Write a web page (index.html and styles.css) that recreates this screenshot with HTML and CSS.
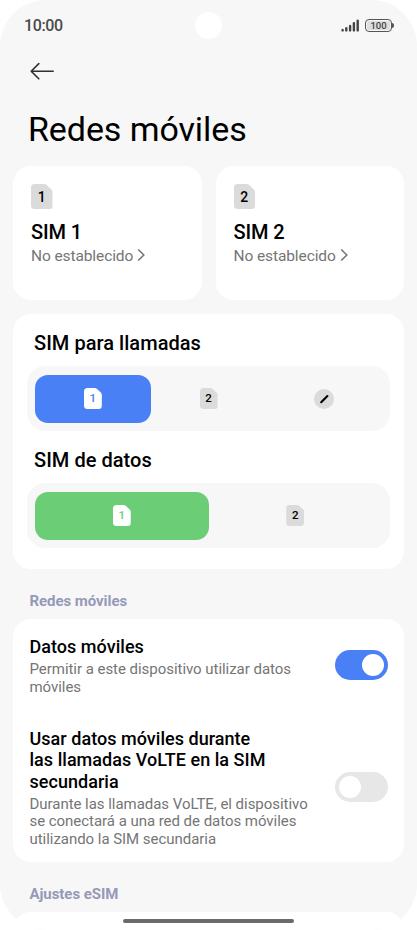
FILE: index.html
```html
<!DOCTYPE html>
<html lang="es">
<head>
    <meta charset="UTF-8">
    <meta name="viewport" content="width=device-width, initial-scale=1.0">
    <title>Redes móviles</title>
    <link rel="stylesheet" href="styles.css">
</head>
<body>

    <div class="phone">
        <header class="status-bar">
            <span class="time">10:00</span>
            <span class="camera"></span>
            <div class="status-icons">
                <svg class="signal" width="19" height="13" viewBox="0 0 19 13">
                    <path d="M1.6 11.4V11M5.3 11.4V9.2M9.1 11.4V6.9M12.9 11.4V4.3M16.7 11.4V1.8" fill="none" stroke="#444" stroke-width="2.4" stroke-linecap="round"/>
                </svg>
                <span class="battery"><span class="battery-level">100</span></span>
            </div>
        </header>

        <nav>
            <svg class="back" width="24" height="18" viewBox="0 0 24 18" aria-label="Atrás">
                <path d="M23.2 9.2H1.2M8.8 1.6L1.2 9.2L8.8 16.8" fill="none" stroke="#303030" stroke-width="1.6" stroke-linecap="round" stroke-linejoin="round"/>
            </svg>
        </nav>

        <h1>Redes móviles</h1>

        <main>
            <section class="sim-cards">
                <article class="card sim-card">
                    <span class="chip chip-large">1</span>
                    <h2>SIM 1</h2>
                    <p>No establecido <svg width="8" height="14" viewBox="0 0 8 14"><path d="M1.2 1.5L6.8 7L1.2 12.5" fill="none" stroke="#777" stroke-width="1.6"/></svg></p>
                </article>
                <article class="card sim-card">
                    <span class="chip chip-large">2</span>
                    <h2>SIM 2</h2>
                    <p>No establecido <svg width="8" height="14" viewBox="0 0 8 14"><path d="M1.2 1.5L6.8 7L1.2 12.5" fill="none" stroke="#777" stroke-width="1.6"/></svg></p>
                </article>
            </section>

            <section class="card sim-select">
                <h2>SIM para llamadas</h2>
                <div class="segmented">
                    <div class="segment active-calls"><span class="chip">1</span></div>
                    <div class="segment"><span class="chip">2</span></div>
                    <div class="segment">
                        <svg width="20" height="20" viewBox="0 0 20 20">
                            <circle cx="10" cy="10" r="10" fill="#dbdbdb"/>
                            <path d="M7.2 13.2L13.4 7" stroke="#000" stroke-width="2.1" stroke-linecap="round"/>
                        </svg>
                    </div>
                </div>
                <h2>SIM de datos</h2>
                <div class="segmented">
                    <div class="segment active-data"><span class="chip">1</span></div>
                    <div class="segment"><span class="chip">2</span></div>
                </div>
            </section>

            <h3 class="section-title">Redes móviles</h3>

            <section class="card settings">
                <div class="setting">
                    <div class="setting-text">
                        <h4>Datos móviles</h4>
                        <p>Permitir a este dispositivo utilizar datos<br>móviles</p>
                    </div>
                    <span class="toggle on"></span>
                </div>
                <div class="setting">
                    <div class="setting-text">
                        <h4>Usar datos móviles durante<br>las llamadas VoLTE en la SIM<br>secundaria</h4>
                        <p>Durante las llamadas VoLTE, el dispositivo<br>se conectará a una red de datos móviles<br>utilizando la SIM secundaria</p>
                    </div>
                    <span class="toggle"></span>
                </div>
            </section>

            <h3 class="section-title">Ajustes eSIM</h3>

            <section class="card next-card"></section>
        </main>

        <div class="home-bar"></div>
    </div>

</body>
</html>
```
FILE: styles.css
```css
:root {
    --background: #f7f7f7;
    --surface: #fff;
    --blue: #4a80f5;
    --green: #6bcd76;
    --chip: #dbdbdb;
    --text-secondary: #757575;
    --section: #9699b8;
}

* {
    box-sizing: border-box;
    margin: 0;
    padding: 0;
}

body {
    font-family: Roboto, sans-serif;
    color: #000;
    background: #fff;
}

.phone {
    position: relative;
    height: 930px;
    overflow: hidden;
    background: var(--background);
    border-radius: 46px;
}

h2, h4 {
    font-weight: 500;
}

svg {
    display: block;
}

/* status bar */
.status-bar {
    display: grid;
    grid-template-columns: 1fr 27px 1fr;
    align-items: center;
    height: 51px;
    padding: 0 24px 0 24px;
}

.time {
    font-size: 16px;
    font-weight: 500;
    letter-spacing: -0.35px;
    color: #4a4a4a;
}

.camera {
    width: 27px;
    height: 27px;
    border-radius: 50%;
    background: #fff;
}

.status-icons {
    display: flex;
    justify-content: flex-end;
    align-items: center;
    gap: 5px;
}

.battery {
    position: relative;
    width: 27px;
    height: 13px;
    margin-right: 1px;
    padding: 1px;
    border: 1.3px solid #555;
    border-radius: 4px;
}

.battery::after {
    content: '';
    position: absolute;
    top: 3px;
    right: -3px;
    width: 2px;
    height: 5px;
    border-radius: 0 2px 2px 0;
    background: #555;
}

.battery-level {
    display: block;
    height: 9px;
    border-radius: 2px;
    background: #dedede;
    font-size: 9.5px;
    font-weight: 500;
    line-height: 10px;
    text-align: center;
    color: #444;
}

nav {
    height: 58px;
    padding: 11px 0 0 30px;
}

h1 {
    padding-left: 28px;
    font-size: 34px;
    font-weight: 400;
    line-height: 40px;
    letter-spacing: -0.08px;
}

main {
    padding: 17px 13px 0;
}

.card {
    background: var(--surface);
    border-radius: 18px;
}

/* small SIM icon with a cut corner */
.chip {
    display: block;
    width: 18px;
    height: 21px;
    background: var(--chip);
    border-radius: 3.5px;
    clip-path: polygon(0 0, 62% 0, 72% 3%, 97% 24%, 100% 32%, 100% 100%, 0 100%);
    font-size: 11.5px;
    font-weight: 500;
    line-height: 21px;
    text-align: center;
}

.chip-large {
    width: 21.5px;
    height: 25px;
    font-size: 14px;
    line-height: 26px;
}

.sim-cards {
    display: grid;
    grid-template-columns: 1fr 1fr;
    gap: 14px;
}

.sim-card {
    height: 134px;
    padding: 18px;
}

.sim-card h2 {
    margin-top: 11px;
    font-size: 20px;
    line-height: 25px;
    letter-spacing: -0.1px;
}

.sim-card p {
    display: flex;
    align-items: center;
    gap: 4px;
    margin-top: 1px;
    font-size: 15.5px;
    line-height: 20px;
    letter-spacing: -0.1px;
    color: var(--text-secondary);
}

.sim-card p svg {
    margin-top: -2px;
}

.sim-select {
    height: 255px;
    margin-top: 14px;
    padding: 17px 14px 0;
}

.sim-select h2 {
    padding-left: 7px;
    font-size: 20px;
    line-height: 24px;
    letter-spacing: 0.04px;
}

.segmented {
    display: flex;
    height: 65px;
    margin: 11px 0 17px;
    padding: 8.5px 8px;
    border-radius: 18px;
    background: var(--background);
}

.segment {
    flex: 1;
    display: flex;
    align-items: center;
    justify-content: center;
    border-radius: 13px;
}

.active-calls {
    background: var(--blue);
    color: var(--blue);
}

.active-data {
    background: var(--green);
    color: var(--green);
}

.active-calls .chip,
.active-data .chip {
    background: #fff;
}

.section-title {
    height: 50px;
    padding: 22px 0 0 16.5px;
    font-size: 15px;
    font-weight: 700;
    line-height: 20px;
    letter-spacing: -0.06px;
    color: var(--section);
}

/* settings list */
.settings {
    height: 243px;
    padding: 17px 16px 0 16.5px;
}

.setting {
    display: flex;
    align-items: center;
    justify-content: space-between;
    margin-bottom: 32px;
}

.setting h4 {
    font-size: 18px;
    line-height: 21.3px;
    letter-spacing: 0.03px;
}

.setting p {
    margin-top: 4px;
    font-size: 15px;
    line-height: 17.4px;
    letter-spacing: -0.04px;
    color: var(--text-secondary);
}

.toggle {
    flex: none;
    width: 53px;
    height: 30px;
    margin-top: -2px;
    padding: 4px;
    border-radius: 15px;
    background: #e7e7e7;
}

.toggle::before {
    content: '';
    display: block;
    width: 22px;
    height: 22px;
    border-radius: 50%;
    background: #fff;
}

.toggle.on {
    background: var(--blue);
}

.toggle.on::before {
    margin-left: auto;
}

.next-card {
    height: 60px;
}

.home-bar {
    position: absolute;
    left: 123px;
    bottom: 7px;
    width: 171px;
    height: 4px;
    border-radius: 2px;
    background: #6b6b6b;
}
```
